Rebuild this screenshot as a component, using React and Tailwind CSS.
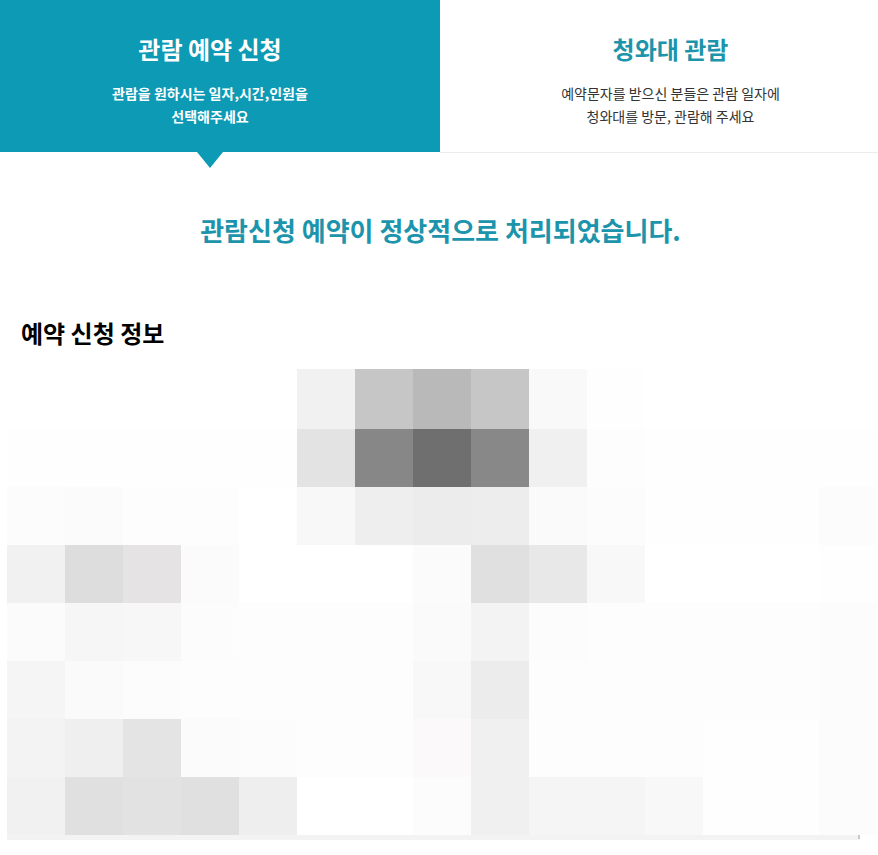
import React from 'react';

// grey levels of the blurred table, 15 cells per row
const mosaic = [
  ['ffffff','ffffff','ffffff','ffffff','ffffff','f1f1f1','c6c6c6','b9b9b9','c6c6c6','f9f9f9','fefefe','ffffff','ffffff','ffffff','ffffff'],
  ['fefefe','fefefe','fefefe','fefefe','fefefe','e3e3e3','878787','6f6f6f','888888','f0f0f0','fdfdfd','fefefe','fefefe','fefefe','fefefe'],
  ['fcfcfc','fbfbfb','fdfdfd','fdfdfd','ffffff','f8f8f8','eeeeee','ececec','ededed','fafafa','fcfcfc','fefefe','fefefe','fefefe','fcfcfc'],
  ['f1f1f1','dddddd','e5e3e3','fbfbfb','ffffff','ffffff','ffffff','fbfbfb','e0e0e0','e8e8e8','f8f8f8','ffffff','ffffff','ffffff','fefefe'],
  ['fbfbfb','f6f6f6','f7f7f7','fcfcfc','fdfdfd','fdfdfd','fdfdfd','fafafa','f3f3f3','fcfcfc','fdfdfd','fdfdfd','fdfdfd','fdfdfd','fcfcfc'],
  ['f5f5f5','fafafa','fcfcfc','fdfdfd','fdfdfd','fdfdfd','fdfdfd','f8f8f8','ececec','fdfdfd','fdfdfd','fdfdfd','fdfdfd','fdfdfd','fcfcfc'],
  ['f3f3f3','efefef','e4e4e4','fbfbfb','fcfcfc','fdfdfd','fdfdfd','fbf9f9','f0f0f0','fdfdfd','fdfdfd','fdfdfd','fefefe','fefefe','fcfcfc'],
  ['f1f1f1','e0e0e0','e2e2e2','e0e0e0','eeeeee','ffffff','ffffff','fcfcfc','f0f0f0','f5f5f5','f5f5f5','f8f8f8','fefefe','fefefe','fcfcfc'],
];

const App = () => {
  return (
    <div className="min-h-[855px] bg-white font-['Noto_Sans_CJK_KR','Noto_Sans',sans-serif]">
      <div className="flex">
        <div className="relative h-[152px] w-[440px] bg-[#0d9ab5] pt-[31px] pr-[20px] text-center text-white">
          <h2 className="text-[24px] leading-[36px] font-bold">관람 예약 신청</h2>
          <p className="mt-[15px] text-[14px] leading-[23px] font-bold">
            관람을 원하시는 일자,시간,인원을
            <br />
            선택해주세요
          </p>
          <div className="absolute top-full left-[197px] h-0 w-0 border-x-[13px] border-t-[16px] border-x-transparent border-t-[#0d9ab5]" />
        </div>
        <div className="h-[153px] w-[438px] border-b border-[#ececec] pt-[31px] pl-[23px] text-center">
          <h2 className="text-[24px] leading-[36px] font-bold text-[#1c94ab]">청와대 관람</h2>
          <p className="mt-[15px] text-[14px] leading-[23px] text-[#333333]">
            예약문자를 받으신 분들은 관람 일자에
            <br />
            청와대를 방문, 관람해 주세요
          </p>
        </div>
      </div>

      <h3 className="mt-[58px] pl-[3px] text-center text-[26px] leading-[38px] font-bold text-[#1c94ab]">
        관람신청 예약이 정상적으로 처리되었습니다.
      </h3>

      <h3 className="mt-[66px] pl-[21px] text-[24px] leading-[36px] font-bold text-black">예약 신청 정보</h3>

      <div className="mt-[18px] ml-[7px] w-[870px]">
        <div className="grid grid-cols-[repeat(15,58px)] grid-rows-[60px_58px_58px_58px_58px_58px_58px_58px]">
          {mosaic.flat().map((color, index) => (
            <div key={index} style={{ backgroundColor: `#${color}` }} />
          ))}
        </div>
        <div className="flex h-[5px] w-[853px] justify-end bg-[#f3f3f3]">
          <div className="h-[4px] w-[2px] bg-[#c8c8c8]" />
        </div>
      </div>
    </div>
  );
};

export default App;
